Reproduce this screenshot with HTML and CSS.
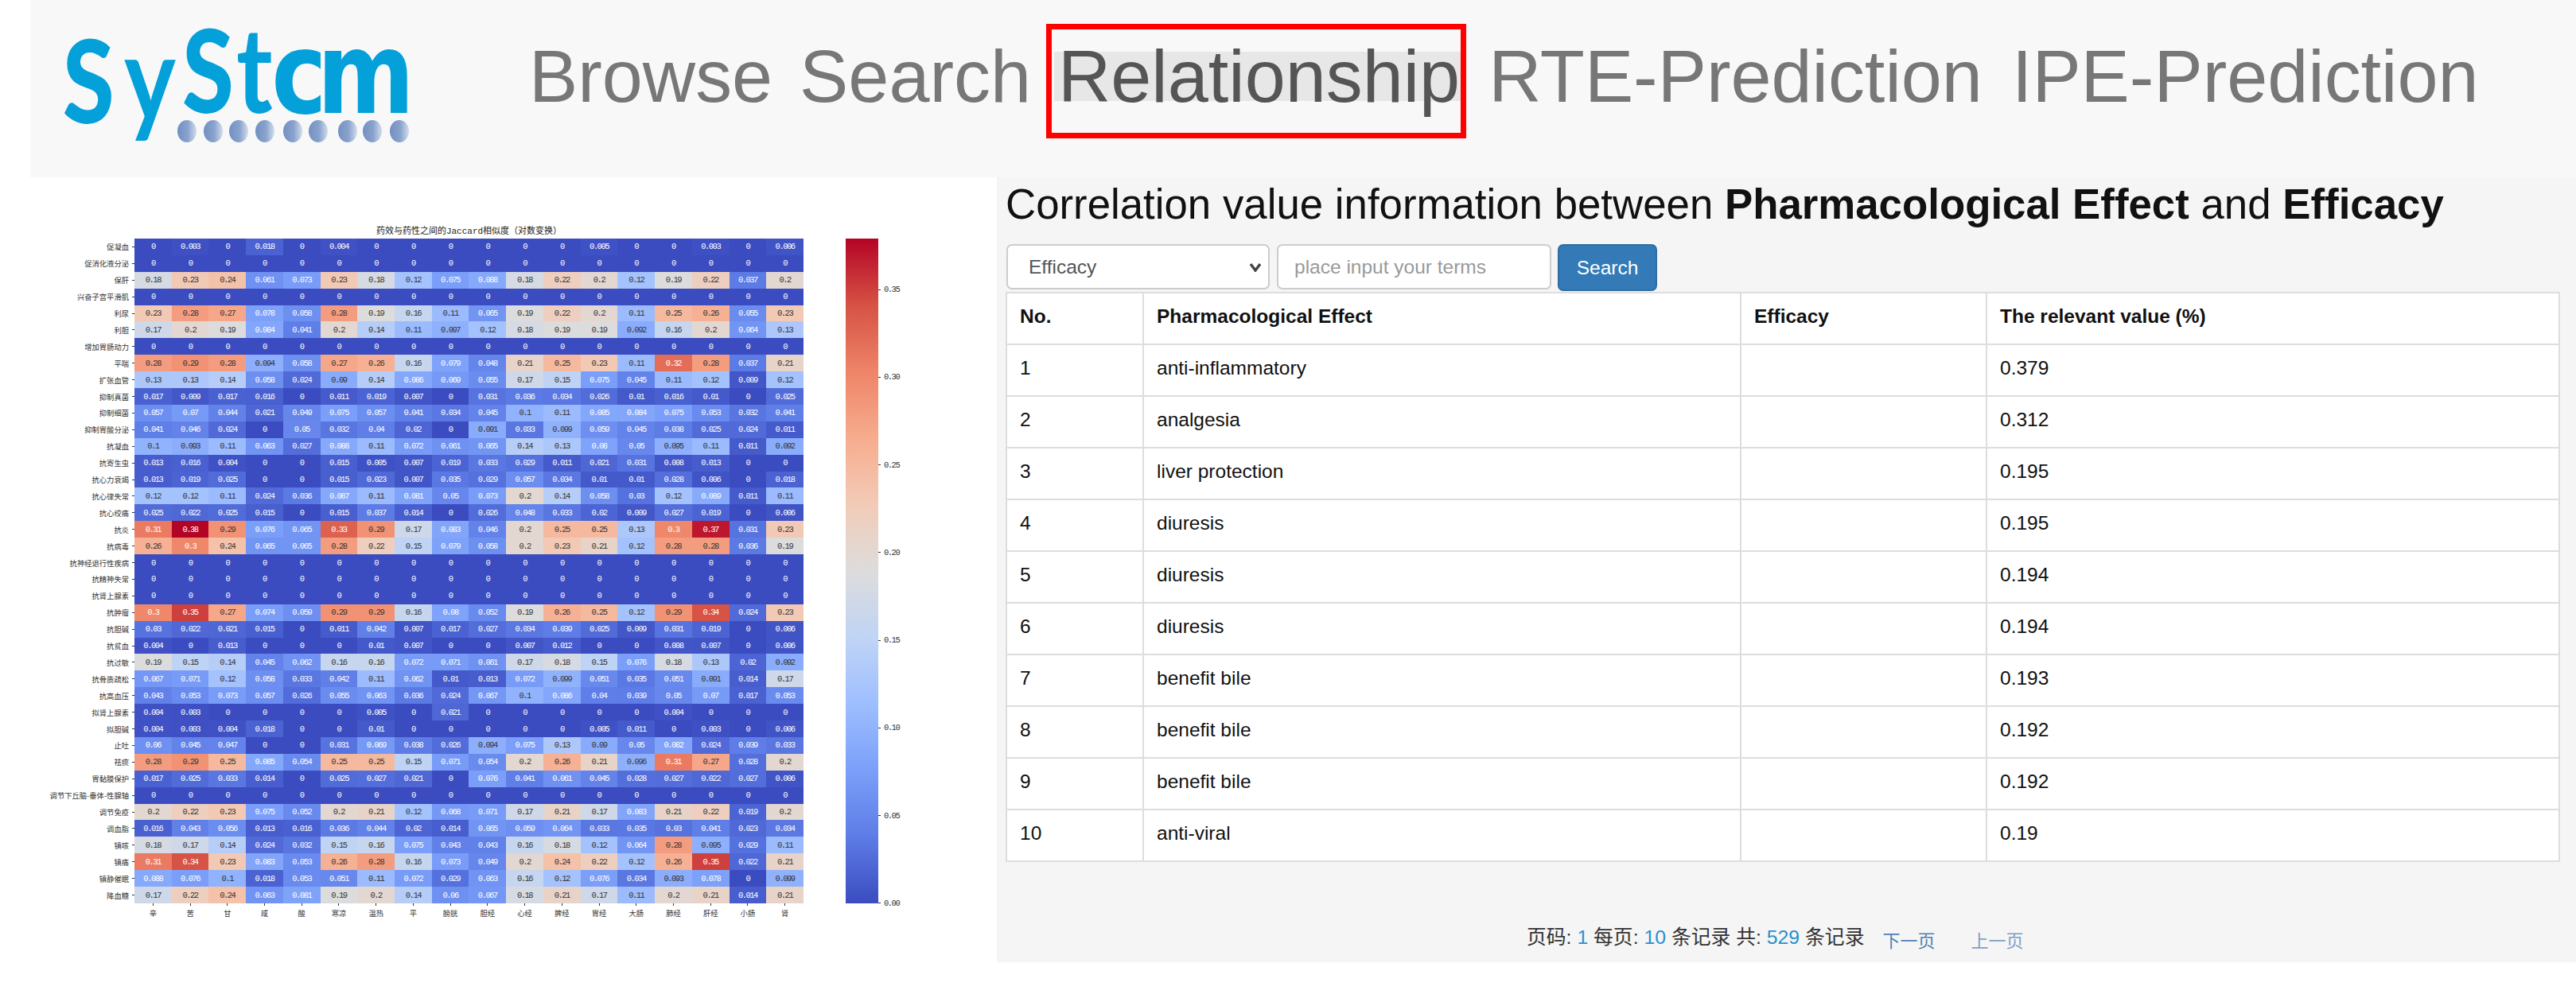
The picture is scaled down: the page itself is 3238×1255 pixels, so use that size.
FILE: index.html
```html
<!DOCTYPE html>
<html lang="en">
<head>
    <meta charset="UTF-8">
    <meta name="viewport" content="width=device-width, initial-scale=1.0">
    <title>SyStcm Relationship</title>
    <link rel="stylesheet" href="styles.css">
</head>
<body>
    <!-- Top bar -->
    <div class="header">
        <svg class="logo" width="500" height="222" viewBox="0 0 500 222">
            <defs>
                <linearGradient id="dotFill">
                    <stop offset="0" stop-color="#7290c2"/>
                    <stop offset="0.55" stop-color="#8aa3cd"/>
                    <stop offset="1" stop-color="#d3dded"/>
                </linearGradient>
            </defs>
            <text class="logo-text" transform="scale(0.82,1)"><tspan class="logo-cap" x="23" y="155" font-size="144">S</tspan><tspan x="117" y="152" font-size="150">y</tspan><tspan class="logo-cap" x="206" y="142" font-size="144">S</tspan><tspan x="289" y="142" font-size="150">t</tspan><tspan class="logo-wide" x="343" y="142" font-size="143">c</tspan><tspan class="logo-wide" x="413" y="142" font-size="143">m</tspan></text>
            <g fill="url(#dotFill)">
                <ellipse cx="175" cy="165" rx="12" ry="14"/>
                <ellipse cx="208" cy="165" rx="12" ry="14"/>
                <ellipse cx="240" cy="165" rx="12" ry="14"/>
                <ellipse cx="273" cy="165" rx="12" ry="14"/>
                <ellipse cx="308" cy="165" rx="12" ry="14"/>
                <ellipse cx="340" cy="165" rx="12" ry="14"/>
                <ellipse cx="377" cy="165" rx="12" ry="14"/>
                <ellipse cx="408" cy="165" rx="12" ry="14"/>
                <ellipse cx="442" cy="165" rx="12" ry="14"/>
            </g>
        </svg>
        <div class="nav">
            <a href="#browse" class="nav-link">Browse</a>
            <a href="#search" class="nav-link">Search</a>
            <a href="#relationship" class="nav-link active">Relationship</a>
            <a href="#rte" class="nav-link">RTE-Prediction</a>
            <a href="#ipe" class="nav-link nav-last">IPE-Prediction</a>
        </div>
    </div>

    <div class="main">
        <!-- Heatmap figure, cells are filled by heatmap.js -->
        <div class="figure">
            <div class="fig-title">药效与药性之间的Jaccard相似度（对数变换）</div>
            <div class="fig-body">
                <div class="y-axis" id="yAxis"></div>
                <div class="heat-col">
                    <div class="heat-grid" id="heatGrid"></div>
                    <div class="x-axis" id="xAxis"></div>
                </div>
                <div class="cbar"></div>
                <div class="cbar-ticks">
                    <div class="cbar-tick">0.35</div>
                    <div class="cbar-tick">0.30</div>
                    <div class="cbar-tick">0.25</div>
                    <div class="cbar-tick">0.20</div>
                    <div class="cbar-tick">0.15</div>
                    <div class="cbar-tick">0.10</div>
                    <div class="cbar-tick">0.05</div>
                    <div class="cbar-tick">0.00</div>
                </div>
            </div>
        </div>

        <!-- Table panel -->
        <div class="panel">
            <h2 class="panel-title">Correlation value information between <b>Pharmacological Effect</b> and <b>Efficacy</b></h2>
            <form class="search-form">
                <select class="field field-select">
                    <option>Efficacy</option>
                    <option>Pharmacological Effect</option>
                </select>
                <input class="field field-input" type="text" placeholder="place input your terms">
                <button class="btn-search" type="button">Search</button>
            </form>
            <table class="result-table">
                <colgroup>
                    <col class="col-no">
                    <col class="col-effect">
                    <col class="col-efficacy">
                    <col class="col-value">
                </colgroup>
                <thead>
                    <tr>
                        <th>No.</th>
                        <th>Pharmacological Effect</th>
                        <th>Efficacy</th>
                        <th>The relevant value (%)</th>
                    </tr>
                </thead>
                <tbody>
                    <tr><td>1</td><td>anti-inflammatory</td><td></td><td>0.379</td></tr>
                    <tr><td>2</td><td>analgesia</td><td></td><td>0.312</td></tr>
                    <tr><td>3</td><td>liver protection</td><td></td><td>0.195</td></tr>
                    <tr><td>4</td><td>diuresis</td><td></td><td>0.195</td></tr>
                    <tr><td>5</td><td>diuresis</td><td></td><td>0.194</td></tr>
                    <tr><td>6</td><td>diuresis</td><td></td><td>0.194</td></tr>
                    <tr><td>7</td><td>benefit bile</td><td></td><td>0.193</td></tr>
                    <tr><td>8</td><td>benefit bile</td><td></td><td>0.192</td></tr>
                    <tr><td>9</td><td>benefit bile</td><td></td><td>0.192</td></tr>
                    <tr><td>10</td><td>anti-viral</td><td></td><td>0.19</td></tr>
                </tbody>
            </table>
            <div class="pager">
                <span class="pager-info">页码: <em>1</em> 每页: <em>10</em> 条记录 共: <em>529</em> 条记录</span>
                <a href="#next" class="pager-next">下一页</a>
                <a href="#prev" class="pager-prev">上一页</a>
            </div>
        </div>
    </div>

    <script src="heatmap.js"></script>
</body>
</html>
```
FILE: styles.css
```css
/* Basic reset */
* {
    margin: 0;
    padding: 0;
    box-sizing: border-box;
}

body {
    width: 3238px;
    height: 1255px;
    overflow: hidden;
    background-color: #fff;
    font-family: "Liberation Sans", "Noto Sans CJK SC", sans-serif;
}

/* Header */
.header {
    display: flex;
    align-items: flex-start;
    height: 223px;
    margin-left: 38px;
    padding-left: 22px;
    background-color: #f8f8f8;
}

.logo {
    flex: none;
}

.logo-text {
    fill: #04a0da;
    font-family: "Lato", sans-serif;
    font-weight: 700;
}

.logo-cap {
    font-weight: 900;
}

.logo-wide {
    font-family: "DejaVu Sans", sans-serif;
}

.nav {
    display: flex;
    gap: 24px;
    margin: 65px 0 0 100px;
}

.nav-link {
    position: relative;
    display: block;
    height: 62px;
    padding: 0 5px;
    font-size: 91.8px;
    line-height: 62px;
    color: #777;
    text-decoration: none;
    white-space: nowrap;
}

.nav-link.active {
    margin-right: 4px;
    padding-right: 3px;
    color: #555;
    background-color: #e7e7e7;
}

.nav-last {
    margin-left: 3px;
}

/* Red marker drawn over the active link */
.nav-link.active::after {
    content: "";
    position: absolute;
    top: -35px;
    left: -10px;
    right: -5px;
    bottom: -47px;
    border: 7px solid #f00;
}

.main {
    display: flex;
    align-items: flex-start;
}

/* Heatmap figure */
.figure {
    flex: none;
    width: 1253px;
    padding-top: 60px;
}

.fig-title {
    width: 841px;
    margin-left: 169px;
    font-family: "Liberation Mono", "Noto Sans CJK SC", monospace;
    font-size: 11px;
    line-height: 17px;
    color: #222;
    text-align: center;
}

.fig-body {
    display: flex;
    align-items: flex-start;
}

.y-axis {
    display: grid;
    grid-template-rows: repeat(40, 1fr);
    flex: none;
    width: 169px;
    height: 836px;
}

.y-label {
    display: flex;
    align-items: center;
    justify-content: flex-end;
    font-family: "Noto Sans CJK SC", sans-serif;
    font-size: 9.3px;
    color: #333;
    white-space: nowrap;
}

.y-label::after {
    content: "";
    width: 3px;
    height: 1px;
    margin-left: 4px;
    background-color: #333;
}

.heat-col {
    flex: none;
    width: 841px;
}

.heat-grid {
    display: grid;
    grid-template-columns: repeat(18, 1fr);
    grid-template-rows: repeat(40, 1fr);
    height: 836px;
}

.heat-cell {
    display: flex;
    align-items: center;
    justify-content: center;
    font-family: "Liberation Mono", monospace;
    font-size: 10.5px;
    letter-spacing: -1.5px;
    color: #fff;
}

.heat-cell.dark {
    color: #333;
}

.x-axis {
    display: grid;
    grid-template-columns: repeat(18, 1fr);
}

.x-label {
    font-family: "Noto Sans CJK SC", sans-serif;
    font-size: 9.3px;
    line-height: 14px;
    color: #333;
    text-align: center;
}

.x-label::before {
    content: "";
    display: block;
    width: 1px;
    height: 3px;
    margin: 0 auto 2px;
    background-color: #333;
}

.cbar {
    flex: none;
    width: 41px;
    height: 836px;
    margin-left: 53px;
    background: linear-gradient(to top, #3b4cc0, #5d7ce6 10%, #7b9ff9 20%, #9ebeff 30%, #c0d4f5 40%, #dddcdc 50%, #f2cbb7 60%, #f7ac8e 70%, #ee8468 80%, #d65244 90%, #b40426);
}

.cbar-ticks {
    display: flex;
    flex-direction: column;
    justify-content: space-between;
    height: 836px;
    padding-top: 64px;
}

.cbar-tick {
    display: flex;
    align-items: center;
    height: 0;
    font-family: "Liberation Mono", monospace;
    font-size: 10.5px;
    letter-spacing: -1.5px;
    color: #333;
}

.cbar-tick::before {
    content: "";
    width: 3px;
    height: 1px;
    margin-right: 4px;
    background-color: #333;
}

/* Table panel */
.panel {
    flex: 1;
    height: 987px;
    padding: 5px 23px 0 11px;
    background-color: #f5f5f5;
}

.panel-title {
    height: 79px;
    font-size: 52.8px;
    font-weight: normal;
    line-height: 57px;
    color: #111;
    white-space: nowrap;
}

.search-form {
    display: flex;
    align-items: flex-start;
    gap: 9px;
    height: 60px;
    padding-left: 1px;
}

.field {
    height: 57px;
    border: 2px solid #ccc;
    border-radius: 7px;
    background-color: #fff;
    font-family: inherit;
    font-size: 24.5px;
    color: #555;
}

.field-select {
    width: 331px;
    padding-left: 26px;
    appearance: none;
    background: #fff url("data:image/svg+xml,%3Csvg xmlns='http://www.w3.org/2000/svg' width='16' height='12'%3E%3Cpath d='M2 2l6 8 6-8' fill='none' stroke='%23444' stroke-width='3.4'/%3E%3C/svg%3E") no-repeat right 8px center;
}

.field-input {
    width: 345px;
    padding-left: 20px;
}

.field-input::placeholder {
    color: #999;
}

.btn-search {
    width: 125px;
    height: 59px;
    margin-left: -1px;
    border: 2px solid #2e6da4;
    border-radius: 7px;
    background-color: #337ab7;
    font-family: inherit;
    font-size: 24.5px;
    color: #fff;
}

.result-table {
    width: 1952px;
    table-layout: fixed;
    border-collapse: collapse;
    background-color: #fff;
    font-size: 24.5px;
    line-height: 34px;
    color: #111;
}

.col-no { width: 172px; }
.col-effect { width: 751px; }
.col-efficacy { width: 309px; }
.col-value { width: 720px; }

.result-table th,
.result-table td {
    padding: 12px 16px;
    border: 2px solid #ddd;
    text-align: left;
    vertical-align: top;
}

.result-table tr {
    height: 65px;
}

/* Pager */
.pager {
    display: flex;
    align-items: flex-start;
    margin: 78px 0 0 655px;
    font-size: 24.8px;
    line-height: 34px;
    color: #333;
}

.pager-info em {
    font-style: normal;
    color: #2a8fd0;
}

.pager a {
    margin-top: 5px;
    font-size: 22px;
    text-decoration: none;
}

.pager-next {
    margin-left: 23px;
    color: #4f7fb3;
}

.pager-prev {
    margin-left: 45px;
    color: #7ba0c8;
}
```
FILE: heatmap.js
```js
// Heatmap data: effect label + one value per property column
const zeros = new Array(18).fill(0);

const columns = ['辛', '苦', '甘', '咸', '酸', '寒凉', '温热', '平', '膀胱', '胆经', '心经', '脾经', '胃经', '大肠', '肺经', '肝经', '小肠', '肾'];

const rows = [
    ['促凝血', [0, .003, 0, .018, 0, .004, 0, 0, 0, 0, 0, 0, .005, 0, 0, .003, 0, .006]],
    ['促消化液分泌', zeros],
    ['保肝', [.18, .23, .24, .061, .073, .23, .18, .12, .075, .088, .18, .22, .2, .12, .19, .22, .037, .2]],
    ['兴奋子宫平滑肌', zeros],
    ['利尿', [.23, .28, .27, .078, .058, .28, .19, .16, .11, .065, .19, .22, .2, .11, .25, .26, .055, .23]],
    ['利胆', [.17, .2, .19, .084, .041, .2, .14, .11, .097, .12, .18, .19, .19, .092, .16, .2, .064, .13]],
    ['增加胃肠动力', zeros],
    ['平喘', [.28, .29, .28, .094, .058, .27, .26, .16, .079, .048, .21, .25, .23, .11, .32, .28, .037, .21]],
    ['扩张血管', [.13, .13, .14, .058, .024, .09, .14, .086, .069, .055, .17, .15, .075, .045, .11, .12, .009, .12]],
    ['抑制真菌', [.017, .009, .017, .016, 0, .011, .019, .007, 0, .031, .036, .034, .026, .01, .016, .01, 0, .025]],
    ['抑制细菌', [.057, .07, .044, .021, .049, .075, .057, .041, .034, .045, .1, .11, .085, .084, .075, .053, .032, .041]],
    ['抑制胃酸分泌', [.041, .046, .024, 0, .05, .032, .04, .02, 0, .091, .033, .099, .059, .045, .038, .025, .024, .011]],
    ['抗凝血', [.1, .093, .11, .063, .027, .088, .11, .072, .061, .065, .14, .13, .08, .05, .095, .11, .011, .092]],
    ['抗寄生虫', [.013, .016, .004, 0, 0, .015, .005, .007, .019, .033, .029, .011, .021, .031, .008, .013, 0, 0]],
    ['抗心力衰竭', [.013, .019, .025, 0, 0, .015, .023, .007, .035, .029, .057, .034, .01, .01, .028, .006, 0, .018]],
    ['抗心律失常', [.12, .12, .11, .024, .036, .087, .11, .081, .05, .073, .2, .14, .058, .03, .12, .089, .011, .11]],
    ['抗心绞痛', [.025, .022, .025, .015, 0, .015, .037, .014, 0, .026, .048, .033, .02, .009, .027, .019, 0, .006]],
    ['抗炎', [.31, .38, .29, .076, .065, .33, .29, .17, .083, .046, .2, .25, .25, .13, .3, .37, .031, .23]],
    ['抗病毒', [.26, .3, .24, .065, .065, .28, .22, .15, .079, .058, .2, .23, .21, .12, .28, .28, .036, .19]],
    ['抗神经退行性疾病', zeros],
    ['抗精神失常', zeros],
    ['抗肾上腺素', zeros],
    ['抗肿瘤', [.3, .35, .27, .074, .059, .29, .29, .16, .08, .052, .19, .26, .25, .12, .29, .34, .024, .23]],
    ['抗胆碱', [.03, .022, .021, .015, 0, .011, .042, .007, .017, .027, .034, .039, .025, .009, .031, .019, 0, .006]],
    ['抗贫血', [.004, 0, .013, 0, 0, 0, .01, .007, 0, 0, .007, .012, 0, 0, .008, .007, 0, .006]],
    ['抗过敏', [.19, .15, .14, .045, .062, .16, .16, .072, .071, .061, .17, .18, .15, .076, .18, .13, .02, .092]],
    ['抗骨质疏松', [.067, .071, .12, .058, .033, .042, .11, .062, .01, .013, .072, .099, .051, .035, .051, .091, .014, .17]],
    ['抗高血压', [.043, .053, .073, .057, .026, .055, .063, .036, .024, .067, .1, .086, .04, .039, .05, .07, .017, .053]],
    ['拟肾上腺素', [.004, .003, 0, 0, 0, 0, .005, 0, .021, 0, 0, 0, 0, 0, .004, 0, 0, 0]],
    ['拟胆碱', [.004, .003, .004, .018, 0, 0, .01, 0, 0, 0, 0, 0, .005, .011, 0, .003, 0, .006]],
    ['止吐', [.06, .045, .047, 0, 0, .031, .069, .038, .026, .094, .075, .13, .09, .05, .082, .024, .039, .033]],
    ['祛痰', [.28, .29, .25, .085, .054, .25, .25, .15, .071, .054, .2, .26, .21, .096, .31, .27, .028, .2]],
    ['胃黏膜保护', [.017, .025, .033, .014, 0, .025, .027, .021, 0, .076, .041, .061, .045, .028, .027, .022, .027, .006]],
    ['调节下丘脑-垂体-性腺轴', zeros],
    ['调节免疫', [.2, .22, .23, .075, .052, .2, .21, .12, .068, .071, .17, .21, .17, .083, .21, .22, .019, .2]],
    ['调血脂', [.016, .043, .056, .013, .016, .036, .044, .02, .014, .065, .059, .064, .033, .035, .03, .041, .023, .034]],
    ['镇咳', [.18, .17, .14, .024, .032, .15, .16, .075, .043, .043, .16, .18, .12, .064, .28, .095, .029, .11]],
    ['镇痛', [.31, .34, .23, .083, .053, .26, .28, .16, .073, .049, .2, .24, .22, .12, .26, .35, .022, .21]],
    ['镇静催眠', [.088, .076, .1, .018, .053, .051, .11, .072, .029, .063, .16, .12, .076, .034, .093, .078, 0, .099]],
    ['降血糖', [.17, .22, .24, .063, .081, .19, .2, .14, .06, .067, .18, .21, .17, .11, .2, .21, .014, .21]]
];

// coolwarm colormap, sampled at every tenth
const stops = [
    [59, 76, 192], [93, 124, 230], [123, 159, 249], [158, 190, 255], [192, 212, 245], [221, 220, 220],
    [242, 203, 183], [247, 172, 142], [238, 132, 104], [214, 82, 68], [180, 4, 38]
];
const maxValue = 0.379;

function cellColor(value) {
    const t = Math.min(value / maxValue, 1) * 10;
    const i = Math.min(Math.floor(t), 9);
    const f = t - i;
    const rgb = stops[i].map((c, k) => Math.round(c + (stops[i + 1][k] - c) * f));
    return 'rgb(' + rgb.join(',') + ')';
}

const yAxis = document.getElementById('yAxis');
const heatGrid = document.getElementById('heatGrid');
const xAxis = document.getElementById('xAxis');

rows.forEach(row => {
    const label = document.createElement('div');
    label.className = 'y-label';
    label.textContent = row[0];
    yAxis.appendChild(label);

    row[1].forEach(value => {
        const cell = document.createElement('div');
        // light cells get dark text, same as seaborn annotations
        cell.className = value >= 0.09 && value < 0.295 ? 'heat-cell dark' : 'heat-cell';
        cell.style.backgroundColor = cellColor(value);
        cell.textContent = value;
        heatGrid.appendChild(cell);
    });
});

columns.forEach(name => {
    const label = document.createElement('div');
    label.className = 'x-label';
    label.textContent = name;
    xAxis.appendChild(label);
});
```
